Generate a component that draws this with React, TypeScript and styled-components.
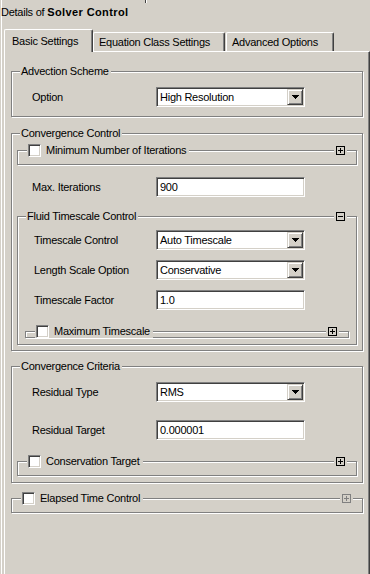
import React from 'react';
import styled, {createGlobalStyle} from 'styled-components';

const GlobalStyle = createGlobalStyle`
  html, body {
    margin: 0;
    padding: 0;
    background: #d4d0c8;
  }

  body {
    font-family: "Liberation Sans", Arial, sans-serif;
    font-size: 11px;
    letter-spacing: -0.25px;
    color: #000;
  }
`

const Window = styled.div`
  width: 370px;
  height: 574px;
  display: flex;
  flex-direction: column;
  overflow: hidden;
  background: #d4d0c8;
  box-shadow: inset 1px 0 0 #d4d0c8, inset 2px 0 0 #ffffff;
`

const TopStrip = styled.div`
  height: 3px;
  display: flex;
`

const StripEdge = styled.div`
  margin-left: 145px;
  width: 3px;
  border-left: 1px solid #404040;
  box-shadow: inset 1px 0 0 #ffffff;
`

const Caption = styled.div`
  height: 26px;
  box-sizing: border-box;
  padding: 2px 0 0 1px;
  line-height: 14px;

  b {
    font-weight: 700;
    letter-spacing: 0.4px;
  }
`

const TabRow = styled.div`
  height: 22px;
  margin-left: 4px;
  display: flex;
  align-items: flex-end;
`

const Tab = styled.div<{ $active?: boolean; $width: number; $gap?: number }>`
  width: ${p => p.$width}px;
  height: ${p => (p.$active ? 23 : 19)}px;
  margin-left: ${p => p.$gap || 0}px;
  margin-bottom: ${p => (p.$active ? -1 : 0)}px;
  padding: ${p => (p.$active ? '4px 0 0 7px' : '2px 0 0 5px')};
  box-sizing: border-box;
  position: relative;
  z-index: ${p => (p.$active ? 1 : 0)};
  background: #d4d0c8;
  border-top: 1px solid #ffffff;
  border-left: 1px solid #ffffff;
  border-right: 1px solid #404040;
  border-radius: 2px 2px 0 0;
  box-shadow: inset -1px 0 0 #808080;
  line-height: 14px;
  white-space: nowrap;
`

const Panel = styled.div`
  flex: 1;
  width: 366px;
  margin-left: 4px;
  box-sizing: border-box;
  padding: 0 6px;
  border-top: 1px solid #ffffff;
  border-left: 1px solid #ffffff;
  border-right: 1px solid #404040;
  box-shadow: inset -1px 0 0 #808080;
  display: flex;
  flex-direction: column;
`

const Group = styled.div<{ $top: number; $bottom?: number; $mx?: number; $height?: number }>`
  margin: ${p => p.$top}px ${p => p.$mx || 0}px 0;
  padding-bottom: ${p => p.$bottom || 0}px;
  ${p => (p.$height ? `height: ${p.$height}px;` : '')}
  box-sizing: border-box;
  display: flex;
  flex-direction: column;
  border: 1px solid #808080;
  box-shadow: inset 1px 1px 0 #ffffff, 1px 1px 0 #ffffff;
`

const GroupHead = styled.div`
  height: 14px;
  margin-top: -8px;
  flex: 0 0 14px;
  display: flex;
  align-items: center;
`

const Legend = styled.span`
  margin-left: 8px;
  padding: 0 2px 0 1px;
  background: #d4d0c8;
  line-height: 14px;
  white-space: nowrap;
`

const CheckLegend = styled.label`
  margin-left: 9px;
  padding: 0 3px 0 1px;
  background: #d4d0c8;
  display: flex;
  align-items: center;
  gap: 5px;
  line-height: 14px;
  white-space: nowrap;
`

const CheckBox = styled.span`
  width: 13px;
  height: 13px;
  box-sizing: border-box;
  background: #ffffff;
  border-style: solid;
  border-width: 1px;
  border-color: #808080 #ffffff #ffffff #808080;
  box-shadow: inset 1px 1px 0 #404040, inset -1px -1px 0 #d4d0c8;
`

const ToggleBox = styled.span`
  margin-left: auto;
  margin-right: 9px;
  padding: 0 2px;
  background: #d4d0c8;
  display: flex;
  align-items: center;

  svg {
    display: block;
  }
`

const Row = styled.div<{ $top: number; $indent: number }>`
  margin-top: ${p => p.$top}px;
  padding-left: ${p => p.$indent}px;
  height: 20px;
  display: flex;
  align-items: center;
`

const Label = styled.span<{ $width: number }>`
  flex: 0 0 ${p => p.$width}px;
  white-space: nowrap;
`

const Sunken = styled.div`
  width: 149px;
  height: 20px;
  box-sizing: border-box;
  background: #ffffff;
  border-style: solid;
  border-width: 1px;
  border-color: #808080 #ffffff #ffffff #808080;
  box-shadow: inset 1px 1px 0 #404040, inset -1px -1px 0 #d4d0c8;
  padding: 1px 1px 1px 3px;
  display: flex;
  align-items: center;
  line-height: 14px;
  white-space: nowrap;
`

const SelectText = styled.span`
  flex: 1;
`

const DropButton = styled.span`
  width: 16px;
  height: 16px;
  box-sizing: border-box;
  background: #d4d0c8;
  border-style: solid;
  border-width: 1px;
  border-color: #d4d0c8 #404040 #404040 #d4d0c8;
  box-shadow: inset 1px 1px 0 #ffffff, inset -1px -1px 0 #808080;
  display: flex;
  align-items: center;
  justify-content: center;

  svg {
    display: block;
  }
`

const Dropdown = (props: { value: string }) => (
    <Sunken>
        <SelectText>{props.value}</SelectText>
        <DropButton>
            <svg width="7" height="4" viewBox="0 0 7 4" shapeRendering="crispEdges">
                <rect x="0" y="0" width="7" height="1" fill="#000"/>
                <rect x="1" y="1" width="5" height="1" fill="#000"/>
                <rect x="2" y="2" width="3" height="1" fill="#000"/>
                <rect x="3" y="3" width="1" height="1" fill="#000"/>
            </svg>
        </DropButton>
    </Sunken>
)

const Toggle = (props: { open?: boolean; disabled?: boolean }) => {
    const color = props.disabled ? '#808080' : '#000000';
    return (
        <ToggleBox>
            <svg width="9" height="9" viewBox="0 0 9 9" shapeRendering="crispEdges">
                <rect x="0.5" y="0.5" width="8" height="8" fill="none" stroke={color}/>
                <path d="M2 4.5h5" stroke={color}/>
                {props.open ? null : <path d="M4.5 2v5" stroke={color}/>}
            </svg>
        </ToggleBox>
    )
}

const CheckTitle = (props: { label: string }) => (
    <CheckLegend>
        <CheckBox/>
        <span>{props.label}</span>
    </CheckLegend>
)

const App = () => {
    return (
        <Window>
            <GlobalStyle/>
            <TopStrip><StripEdge/></TopStrip>
            <Caption>Details of <b>Solver Control</b></Caption>
            <TabRow>
                <Tab $active $width={89}>Basic Settings</Tab>
                <Tab $width={132}>Equation Class Settings</Tab>
                <Tab $width={108} $gap={1}>Advanced Options</Tab>
            </TabRow>
            <Panel>
                <Group $top={19} $bottom={9}>
                    <GroupHead><Legend>Advection Scheme</Legend></GroupHead>
                    <Row $top={9} $indent={20}>
                        <Label $width={124}>Option</Label>
                        <Dropdown value="High Resolution"/>
                    </Row>
                </Group>

                <Group $top={16} $bottom={5}>
                    <GroupHead><Legend>Convergence Control</Legend></GroupHead>
                    <Group $top={10} $mx={5} $height={15}>
                        <GroupHead>
                            <CheckTitle label="Minimum Number of Iterations"/>
                            <Toggle/>
                        </GroupHead>
                    </Group>
                    <Row $top={12} $indent={20}>
                        <Label $width={124}>Max. Iterations</Label>
                        <Sunken>900</Sunken>
                    </Row>
                    <Group $top={19} $mx={5} $bottom={6}>
                        <GroupHead>
                            <Legend>Fluid Timescale Control</Legend>
                            <Toggle open/>
                        </GroupHead>
                        <Row $top={7} $indent={16}>
                            <Label $width={122}>Timescale Control</Label>
                            <Dropdown value="Auto Timescale"/>
                        </Row>
                        <Row $top={10} $indent={16}>
                            <Label $width={122}>Length Scale Option</Label>
                            <Dropdown value="Conservative"/>
                        </Row>
                        <Row $top={10} $indent={16}>
                            <Label $width={122}>Timescale Factor</Label>
                            <Sunken>1.0</Sunken>
                        </Row>
                        <Group $top={21} $mx={7} $height={7}>
                            <GroupHead>
                                <CheckTitle label="Maximum Timescale"/>
                                <Toggle/>
                            </GroupHead>
                        </Group>
                    </Group>
                </Group>

                <Group $top={15} $bottom={6}>
                    <GroupHead><Legend>Convergence Criteria</Legend></GroupHead>
                    <Row $top={9} $indent={20}>
                        <Label $width={124}>Residual Type</Label>
                        <Dropdown value="RMS"/>
                    </Row>
                    <Row $top={18} $indent={20}>
                        <Label $width={124}>Residual Target</Label>
                        <Sunken>0.000001</Sunken>
                    </Row>
                    <Group $top={21} $mx={5} $height={15}>
                        <GroupHead>
                            <CheckTitle label="Conservation Target"/>
                            <Toggle/>
                        </GroupHead>
                    </Group>
                </Group>

                <Group $top={15} $height={15}>
                    <GroupHead>
                        <CheckTitle label="Elapsed Time Control"/>
                        <Toggle disabled/>
                    </GroupHead>
                </Group>
            </Panel>
        </Window>
    )
}

export default App;
